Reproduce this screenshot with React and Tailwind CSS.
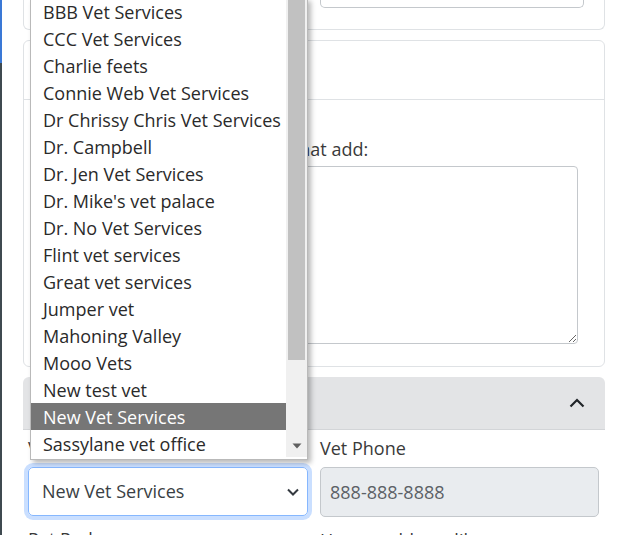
import React from 'react';

const vets = [
  'BBB Vet Services',
  'CCC Vet Services',
  'Charlie feets',
  'Connie Web Vet Services',
  'Dr Chrissy Chris Vet Services',
  'Dr. Campbell',
  'Dr. Jen Vet Services',
  "Dr. Mike's vet palace",
  'Dr. No Vet Services',
  'Flint vet services',
  'Great vet services',
  'Jumper vet',
  'Mahoning Valley',
  'Mooo Vets',
  'New test vet',
  'New Vet Services',
  'Sassylane vet office',
];

const selected = 'New Vet Services';

function VetDropdown() {
  return (
    <div className="absolute left-[30px] top-[-2px] w-[278px] flex border border-t-0 border-[#b9b9b9] bg-white pb-[2px] shadow-[3px_3px_5px_rgba(0,0,0,0.28)]">
      <ul className="flex-1">
        {vets.map((v) => (
          <li
            key={v}
            className={
              v === selected
                ? 'h-[27px] pl-[12px] leading-[28px] bg-[#767676] text-white whitespace-nowrap'
                : 'h-[27px] pl-[12px] leading-[28px] text-[#2a2a2a] whitespace-nowrap'
            }
          >
            {v}
          </li>
        ))}
      </ul>
      {/* scrollbar */}
      <div className="w-[21px] bg-[#f0f0f0] flex flex-col items-center">
        <div className="w-[17px] h-[362px] bg-[#c1c1c1]" />
        <div className="flex-1" />
        <svg width="10" height="6" viewBox="0 0 10 6" className="mb-[8px]">
          <path d="M0.5 0.5 L9.5 0.5 L5 5.5 Z" fill="#606060" />
        </svg>
      </div>
    </div>
  );
}

export default function App() {
  return (
    <div className="relative flex h-[535px] w-[625px] overflow-hidden bg-white font-['Open_Sans',sans-serif] text-[18px] text-[#212529]">
      {/* window edge */}
      <div className="flex w-[2px] flex-col">
        <div className="h-[63px] bg-[#3a78d6]" />
        <div className="flex-1 bg-[#3f4a50]" />
      </div>

      <div className="ml-[21px] flex w-[582px] flex-col">
        {/* previous card, scrolled off the top */}
        <div className="h-[30px] shrink-0 rounded-b-[6px] border border-t-0 border-[#dfe2e5]">
          <div className="ml-[296px] h-[8px] w-[264px] rounded-b-[5px] border border-t-0 border-[#c4c8cc]" />
        </div>

        {/* notes card */}
        <div className="mt-[10px] flex h-[327px] shrink-0 flex-col rounded-[6px] border border-[#dfe2e5]">
          <div className="h-[59px] shrink-0 border-b border-[#dfe2e5]" />
          <div className="flex flex-col pl-[12px] pr-[26px]">
            <label className="mt-[36px] mb-[4px] ml-[15px] leading-[26px] text-[#3a3a3a] whitespace-nowrap">
              Anything else you would like th<span>at add:</span>
            </label>
            <textarea className="h-[178px] w-full shrink-0 rounded-[4px] border border-[#c4c8cc] bg-white" />
          </div>
        </div>

        {/* vet accordion */}
        <div className="mt-[10px] flex h-[53px] shrink-0 items-center justify-end rounded-t-[6px] border-b border-[#d3d5d8] bg-[#e3e4e6] pr-[20px]">
          <svg width="16" height="10" viewBox="0 0 16 10">
            <path d="M1.5 8.5 L8 2 L14.5 8.5" fill="none" stroke="#212529" strokeWidth="2.2" />
          </svg>
        </div>

        <div className="grid shrink-0 grid-cols-[280px_279px] gap-x-[12px] pl-[5px] pt-[5px]">
          <div className="flex flex-col">
            <label className="mb-[5px] leading-[27px] text-[#3a3a3a]">Vet Name</label>
            <div className="flex h-[49px] items-center justify-between rounded-[5px] border border-[#86b7fe] pl-[13px] pr-[7px] shadow-[0_0_0_4px_rgba(13,110,253,0.22)]">
              <span className="text-[#3a3f44]">New Vet Services</span>
              <svg width="14" height="10" viewBox="0 0 14 10">
                <path d="M2 2.5 L7 7.5 L12 2.5" fill="none" stroke="#343a40" strokeWidth="2" />
              </svg>
            </div>
            <label className="mt-[10px] leading-[26px] text-[#3a3a3a]">Pet Parlor</label>
          </div>
          <div className="flex flex-col">
            <label className="mb-[5px] leading-[27px] text-[#3a3a3a]">Vet Phone</label>
            <div className="flex h-[50px] items-center rounded-[5px] border border-[#c4c8cc] bg-[#e9ecef] pl-[9px] text-[#5c6166]">
              888-888-8888
            </div>
            <label className="mt-[10px] leading-[26px] text-[#3a3a3a]">How would you like</label>
          </div>
        </div>
      </div>

      <VetDropdown />
    </div>
  );
}
